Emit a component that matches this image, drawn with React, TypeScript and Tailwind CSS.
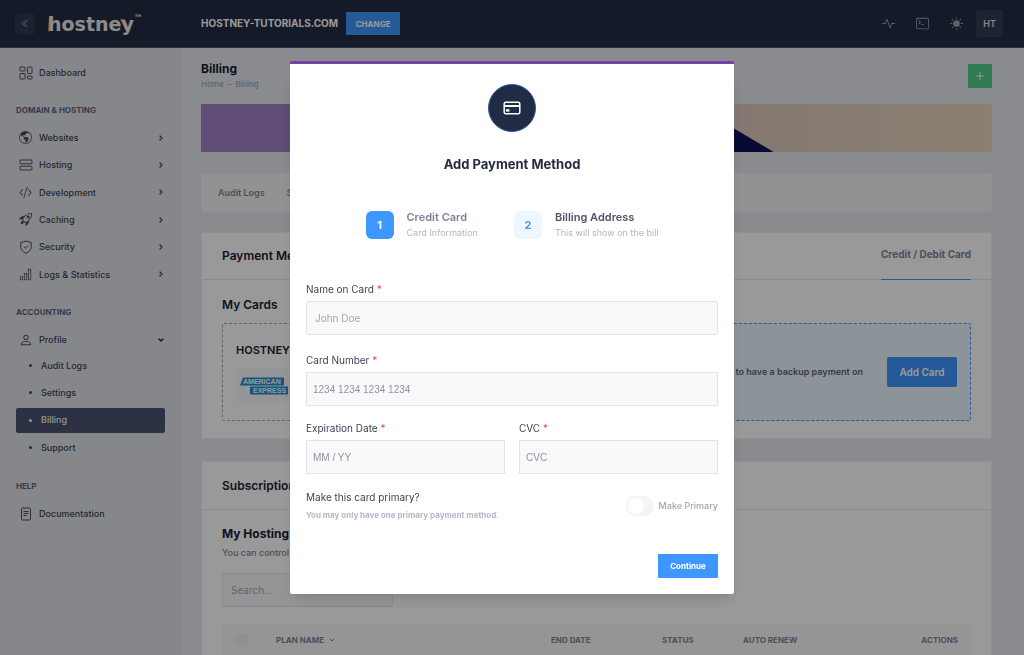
import type { ReactNode } from 'react';
import {
  BsActivity,
  BsBarChart,
  BsChevronDoubleLeft,
  BsCodeSlash,
  BsGlobeAmericas,
  BsPerson,
  BsRocketTakeoff,
  BsSunFill,
  BsTerminal,
} from 'react-icons/bs';
import { ChevronDown, ChevronRight, Plus } from 'lucide-react';

const DashboardIcon = () => (
  <svg viewBox="0 0 14 14" className="size-[14px]" fill="none" stroke="currentColor">
    <rect x="1" y="1" width="5" height="4" rx="0.6" />
    <rect x="8.5" y="1" width="4.5" height="6.5" rx="0.6" />
    <rect x="1" y="7.5" width="5" height="5.5" rx="0.6" />
    <rect x="8.5" y="10" width="4.5" height="3" rx="0.6" />
  </svg>
);

const ServerIcon = () => (
  <svg viewBox="0 0 14 14" className="size-[14px]" fill="none" stroke="currentColor">
    <rect x="1" y="2" width="12" height="3.8" rx="1" />
    <rect x="1" y="8.2" width="12" height="3.8" rx="1" />
  </svg>
);

const ShieldIcon = () => (
  <svg viewBox="0 0 14 14" className="size-[14px]" fill="none" stroke="currentColor">
    <path d="M7 1 12.2 2.6V7.4C12.2 10 9.8 12 7 13.2 4.2 12 1.8 10 1.8 7.4V2.6Z" strokeLinejoin="round" />
    <path d="M5 6.8 6.5 8.2 9.2 5.6" />
  </svg>
);

const DocumentIcon = () => (
  <svg viewBox="0 0 14 14" className="size-[14px]" fill="none" stroke="currentColor">
    <rect x="2.5" y="1" width="9" height="12" rx="1.2" />
    <path d="M4.5 4.5h5M4.5 6.5h5M4.5 8.5h3" />
  </svg>
);

const CardIcon = () => (
  <svg viewBox="0 0 18 14" className="h-[14px] w-[18px]" fill="none" stroke="currentColor">
    <rect x="1.2" y="1.2" width="15.6" height="11.6" rx="1.6" strokeWidth="1.5" />
    <path d="M1 5h16" strokeWidth="2" />
    <rect x="3" y="8.2" width="3.4" height="2.4" fill="currentColor" stroke="none" />
  </svg>
);

const AmexLogo = () => (
  <svg viewBox="0 0 50 20" className="h-5 w-[50px]" role="img" aria-label="American Express">
    <path d="M3 1.5H44V9.5H0Z" fill="#1e8fd0" />
    <path d="M10 10.5H48V18.5H10Z" fill="#1e8fd0" />
    <text x="3" y="8" fontSize="7" fontWeight="700" fill="#fff" fontFamily="Liberation Sans, sans-serif">AMERICAN</text>
    <text x="13" y="17" fontSize="7" fontWeight="700" fill="#fff" fontFamily="Liberation Sans, sans-serif">EXPRESS</text>
  </svg>
);

const NavItem = ({ icon, label, arrow }: { icon: ReactNode; label: string; arrow?: 'right' | 'down' }) => (
  <li>
    <a href="#" className="flex h-[27px] items-center pl-[3px] text-[#3f4254]">
      <span className="flex w-5 text-[#4b4d58]">{icon}</span>
      <span className="flex-1">{label}</span>
      {arrow === 'right' && <ChevronRight className="size-2 text-[#3f4a70]" strokeWidth={4} />}
      {arrow === 'down' && <ChevronDown className="size-2 text-[#181c32]" strokeWidth={4} />}
    </a>
  </li>
);

const SubItem = ({ label, active }: { label: string; active?: boolean }) => (
  <li>
    <a
      href="#"
      className={
        active
          ? 'flex h-[25px] items-center gap-[9px] rounded-xs bg-[#4a5270] px-[13px] text-[#f4f4f6]'
          : 'flex h-[25px] items-center gap-[9px] px-[13px] text-[#3f4254]'
      }
    >
      <span className="size-[3px] rounded-full bg-current" />
      {label}
    </a>
  </li>
);

const NavHeading = ({ children }: { children: ReactNode }) => (
  <h2 className="flex h-7 items-center text-[8px] font-bold text-[#5e6278]">{children}</h2>
);

const Header = () => (
  <header className="flex h-12 shrink-0 items-center border-b border-[#4a5270] bg-[#222c44] pr-[21px] text-white">
    <div className="flex w-[201px] items-center gap-[13px] pl-[15px]">
      <button aria-label="Collapse menu" className="flex size-5 items-center justify-center rounded-xs bg-[#30384f] text-[#b5b5c3]">
        <BsChevronDoubleLeft className="size-[9px]" />
      </button>
      <a href="#" className="relative flex font-['DejaVu_Sans',sans-serif] text-[19px] leading-7 font-bold text-[#e8e8e8]">
        <svg viewBox="0 0 90 28" className="absolute inset-0 h-7 w-[90px]">
          <path d="M1 6H3V19L0 22Z" fill="#f08a3c" />
          <path d="M72 9H76L80 18L78 21Z" fill="#f08a3c" />
        </svg>
        <span className="relative">hostney</span>
        <sup className="top-0 text-[9px] leading-4">™</sup>
      </a>
    </div>
    <span className="text-[10px] font-bold">HOSTNEY-TUTORIALS.COM</span>
    <button className="ml-2 h-[23px] w-[54px] bg-[#3e97ff] text-[8px] font-bold">CHANGE</button>
    <div className="ml-auto flex items-center gap-[21px] text-[#a1a5b7]">
      <button aria-label="Activity"><BsActivity className="size-[13px]" /></button>
      <button aria-label="Terminal"><BsTerminal className="size-[13px]" /></button>
      <button aria-label="Theme"><BsSunFill className="size-[13px]" /></button>
      <button className="-ml-2 size-[27px] rounded-xs bg-[#333b52] text-[9px] font-semibold text-[#e0e2ea]">HT</button>
    </div>
  </header>
);

const Sidebar = () => (
  <nav className="w-[181px] shrink-0 bg-[#e0e2e7] px-4 pt-[11px] text-[9px] font-medium">
    <ul>
      <NavItem icon={<DashboardIcon />} label="Dashboard" />
    </ul>
    <div className="mt-[10px]">
      <NavHeading>DOMAIN &amp; HOSTING</NavHeading>
      <ul className="flex h-[164px] flex-col justify-between">
        <NavItem icon={<BsGlobeAmericas className="size-[13px]" />} label="Websites" arrow="right" />
        <NavItem icon={<ServerIcon />} label="Hosting" arrow="right" />
        <NavItem icon={<BsCodeSlash className="size-[13px]" />} label="Development" arrow="right" />
        <NavItem icon={<BsRocketTakeoff className="size-[13px]" />} label="Caching" arrow="right" />
        <NavItem icon={<ShieldIcon />} label="Security" arrow="right" />
        <NavItem icon={<BsBarChart className="size-[13px]" />} label="Logs & Statistics" arrow="right" />
      </ul>
    </div>
    <div className="mt-[10px]">
      <NavHeading>ACCOUNTING</NavHeading>
      <ul>
        <NavItem icon={<BsPerson className="size-[14px]" />} label="Profile" arrow="down" />
      </ul>
      <ul className="flex h-[107px] flex-col justify-between">
        <SubItem label="Audit Logs" />
        <SubItem label="Settings" />
        <SubItem label="Billing" active />
        <SubItem label="Support" />
      </ul>
    </div>
    <div className="mt-3">
      <NavHeading>HELP</NavHeading>
      <ul>
        <NavItem icon={<DocumentIcon />} label="Documentation" />
      </ul>
    </div>
  </nav>
);

const PaymentMethods = () => (
  <section className="mt-5 border border-[#f1f1f4] bg-white">
    <div className="flex h-[47px] items-stretch justify-between border-b border-[#e4e6ef] px-5">
      <h2 className="self-center text-[12px] font-semibold">Payment Methods</h2>
      <button className="-mb-px border-b border-[#3e97ff] pb-1 text-[10px] font-bold text-[#7e8299]">Credit / Debit Card</button>
    </div>
    <div className="px-5 pt-[15px] pb-[17px]">
      <h3 className="text-[12px] leading-5 font-semibold">My Cards</h3>
      <div className="mt-2 grid grid-cols-2 gap-5">
        <div className="h-[98px] rounded-xs border border-dashed border-[#a1a5b7] px-[13px] pt-[18px]">
          <p className="text-[11px] leading-4 font-semibold">HOSTNEY</p>
          <div className="mt-[11px] flex h-[33px] w-16 items-center rounded bg-[#f5f8fa] pl-1">
            <AmexLogo />
          </div>
        </div>
        <div className="flex h-[98px] items-center justify-end gap-6 rounded-xs border border-dashed border-[#3e97ff] bg-[#ebf7ff] px-[13px]">
          <p className="text-[9px] font-semibold whitespace-nowrap text-[#5e6278]">It is best to have a backup payment on</p>
          <button className="h-[30px] w-[70px] rounded-xs bg-[#3e97ff] text-[10px] font-semibold text-white">Add Card</button>
        </div>
      </div>
    </div>
  </section>
);

const Subscriptions = () => (
  <section className="mt-[22px] border border-[#f1f1f4] bg-white">
    <div className="flex h-12 items-center border-b border-[#e4e6ef] px-5">
      <h2 className="text-[12px] font-semibold">Subscriptions</h2>
    </div>
    <div className="px-5 pt-4">
      <h3 className="text-[12px] leading-4 font-bold">My Hosting</h3>
      <p className="mt-[3px] text-[9px] leading-4 font-medium text-[#7e8299]">You can control your plans</p>
      <input
        aria-label="Search"
        placeholder="Search..."
        className="mt-3 block h-[34px] w-[171px] rounded-xs border border-[#e4e6ef] bg-[#f9f9f9] px-2 text-[10px] placeholder:text-[#a1a5b7]"
      />
      <table className="mt-[17px] w-full table-fixed bg-[#f9f9f9] text-left text-[8px] text-[#7e8299]">
        <thead>
          <tr className="h-8">
            <th className="w-[54px] pl-[13px]">
              <input type="checkbox" aria-label="Select all" className="block size-[13px] appearance-none rounded bg-[#eff0f3]" />
            </th>
            <th className="font-bold">
              <span className="flex items-center gap-1">PLAN NAME <ChevronDown className="size-2" strokeWidth={3} /></span>
            </th>
            <th className="w-[111px] font-bold">END DATE</th>
            <th className="w-[81px] font-bold">STATUS</th>
            <th className="w-[114px] font-bold">AUTO RENEW</th>
            <th className="w-[114px] pr-[13px] text-right font-bold">ACTIONS</th>
          </tr>
        </thead>
      </table>
    </div>
  </section>
);

const Content = () => (
  <main className="min-w-0 flex-1 bg-[#e6e8ee] pt-[11px] pr-8 pl-5">
    <div className="flex items-center justify-between">
      <div>
        <h1 className="text-[12px] leading-5 font-bold">Billing</h1>
        <p className="flex gap-1 text-[8px] leading-[10px] font-medium text-[#a1a5b7]">
          <a href="#">Home</a>
          <span>–</span>
          <span>Billing</span>
        </p>
      </div>
      <button aria-label="Add" className="mt-1 flex size-6 items-center justify-center bg-[#50cd89] text-white">
        <Plus className="size-3" />
      </button>
    </div>
    <svg viewBox="0 0 790 48" preserveAspectRatio="none" className="mt-[15px] block h-12 w-full">
      <defs>
        <linearGradient id="sand" x1="0" x2="1">
          <stop offset="0.6" stopColor="#d8c5bc" />
          <stop offset="1" stopColor="#e8d5bd" />
        </linearGradient>
      </defs>
      <rect width="790" height="48" fill="url(#sand)" />
      <path d="M0 0H300V48H0Z" fill="#9f80c9" />
      <path d="M491 0 572 48H300V0Z" fill="#0c1254" />
    </svg>
    <div className="mt-[21px] flex h-[39px] items-center gap-[22px] rounded-xs border border-[#eceef2] bg-[#f4f4f4] px-4 text-[9px] font-semibold text-[#7e8299]">
      <a href="#">Audit Logs</a>
      <a href="#">Settings</a>
    </div>
    <PaymentMethods />
    <Subscriptions />
  </main>
);

const Field = ({ id, label, placeholder, plain }: { id: string; label: string; placeholder: string; plain?: boolean }) => (
  <div className="flex-1">
    <label htmlFor={id} className="block text-[10px] leading-4 text-[#3f4254]">
      {label} <span className="text-[#f1416c]">*</span>
    </label>
    <input
      id={id}
      placeholder={placeholder}
      className={
        plain
          ? "mt-1 block h-[34px] w-full border border-[#e1e3ea] bg-[#f9f9f9] px-[6px] font-['Liberation_Sans',sans-serif] text-[10px] placeholder:text-[#8f92a8]"
          : 'mt-1 block h-[34px] w-full rounded-xs border border-[#e1e3ea] bg-[#f9f9f9] px-2 text-[10px] placeholder:text-[#a1a5b7]'
      }
    />
  </div>
);

const PaymentModal = () => (
  <div className="fixed inset-0 flex items-center justify-center bg-black/40">
    <div
      role="dialog"
      aria-labelledby="modal-title"
      className="w-[444px] rounded-xs border-t-3 border-[#7542a5] bg-white px-4 pt-5 pb-4 shadow-lg"
    >
      <div className="mx-auto flex size-12 items-center justify-center rounded-full border border-[#2b5a96] bg-[#202b45] text-white">
        <CardIcon />
      </div>
      <h2 id="modal-title" className="mt-[22px] text-center text-[13px] leading-5 font-bold text-[#252a42]">Add Payment Method</h2>
      <ol className="mt-[35px] flex justify-center gap-9">
        <li className="flex items-center gap-[13px]">
          <span className="flex size-7 items-center justify-center rounded-md bg-[#3e97ff] text-[11px] font-bold text-white">1</span>
          <div>
            <p className="text-[11px] leading-4 font-semibold text-[#7e8299]">Credit Card</p>
            <p className="text-[9px] leading-4 text-[#b5b5c3]">Card Information</p>
          </div>
        </li>
        <li className="flex items-center gap-[13px]">
          <span className="flex size-7 items-center justify-center rounded-md bg-[#eef6ff] text-[11px] font-bold text-[#3e97ff]">2</span>
          <div>
            <p className="text-[11px] leading-4 font-semibold text-[#50546a]">Billing Address</p>
            <p className="text-[9px] leading-4 text-[#b5b5c3]">This will show on the bill</p>
          </div>
        </li>
      </ol>
      <form className="mt-10">
        <Field id="name" label="Name on Card" placeholder="John Doe" />
        <div className="mt-[17px]">
          <Field id="number" label="Card Number" placeholder="1234 1234 1234 1234" plain />
        </div>
        <div className="mt-[14px] flex gap-[14px]">
          <Field id="expiry" label="Expiration Date" placeholder="MM / YY" plain />
          <Field id="cvc" label="CVC" placeholder="CVC" plain />
        </div>
        <div className="mt-[15px] flex items-center justify-between">
          <div>
            <p className="text-[10px] leading-4 text-[#3f4254]">Make this card primary?</p>
            <p className="mt-[3px] text-[8px] leading-[14px] font-bold text-[#b5b8c8]">You may only have one primary payment method.</p>
          </div>
          <label className="flex items-center gap-[5px] text-[9px] font-medium text-[#a1a5b7]">
            <input
              type="checkbox"
              className="flex h-5 w-7 appearance-none items-center rounded-full bg-[#f4f4f4] px-[2px] before:size-4 before:rounded-full before:bg-white"
            />
            Make Primary
          </label>
        </div>
        <div className="mt-8 flex justify-end">
          <button type="button" className="h-6 w-[60px] bg-[#3e97ff] text-[8px] font-bold text-white">Continue</button>
        </div>
      </form>
    </div>
  </div>
);

export default function App() {
  return (
    <div className="flex h-screen flex-col overflow-hidden font-['Inter',sans-serif] text-[#181c32]">
      <Header />
      <div className="flex flex-1">
        <Sidebar />
        <Content />
      </div>
      <PaymentModal />
    </div>
  );
}
